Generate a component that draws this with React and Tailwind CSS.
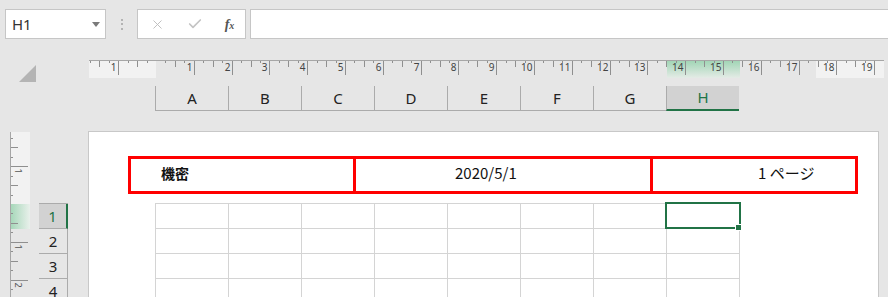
import { X, Check } from "lucide-react";

const COLS = ["A", "B", "C", "D", "E", "F", "G", "H"];
const ROWS = [1, 2, 3, 4];
const CM = 37.8;

function HRuler() {
  const w = 795;
  const ox = 67;
  const q = CM / 4;
  const ticks = [];
  for (let i = -7; ox + i * q <= w; i++) {
    if (i === 0) continue;
    const x = Math.round(ox + i * q) + 0.5;
    const len = i % 4 === 0 ? 14 : i % 2 === 0 ? 6 : 2;
    ticks.push(<line key={"t" + i} x1={x} y1={1} x2={x} y2={1 + len} stroke="#8f8f8f" strokeWidth="1" />);
    if (i % 4 === 0) {
      ticks.push(
        <text key={"l" + i} x={x - 2} y={11} textAnchor="end" fontSize="10" fill="#444" fontFamily="Noto Sans, sans-serif">
          {Math.abs(i / 4)}
        </text>
      );
    }
  }
  return (
    <svg width={w} height={18} className="block">
      <defs>
        <linearGradient id="hg" x1="0" y1="0" x2="0" y2="1">
          <stop offset="0" stopColor="#9ed4b3" />
          <stop offset="1" stopColor="#e4ebe6" />
        </linearGradient>
      </defs>
      <rect x="0" y="0" width="67" height="18" fill="#f2f2f2" />
      <rect x="727" y="0" width="68" height="18" fill="#f2f2f2" />
      <rect x="578" y="0" width="73" height="18" fill="url(#hg)" />
      <line x1="0" y1="0.5" x2={w} y2="0.5" stroke="#a6a6a6" />
      {ticks}
    </svg>
  );
}

function VRuler() {
  const h = 166;
  const oy = 72;
  const q = CM / 4;
  const ticks = [];
  for (let i = -7; oy + i * q <= h; i++) {
    if (i === 0) continue;
    const y = Math.round(oy + i * q) + 0.5;
    const len = i % 4 === 0 ? 17 : i % 2 === 0 ? 7 : 2;
    ticks.push(<line key={"t" + i} x1={1} y1={y} x2={1 + len} y2={y} stroke="#8f8f8f" strokeWidth="1" />);
    if (i % 4 === 0) {
      ticks.push(
        <text
          key={"l" + i}
          x={0}
          y={0}
          transform={`translate(5 ${y + 2}) rotate(90)`}
          fontSize="9"
          fill="#555"
          fontFamily="Noto Sans, sans-serif"
        >
          {Math.abs(i / 4)}
        </text>
      );
    }
  }
  return (
    <svg width={20} height={h} className="block">
      <defs>
        <linearGradient id="vg" x1="0" y1="0" x2="1" y2="0">
          <stop offset="0" stopColor="#a3d6b7" />
          <stop offset="1" stopColor="#e9f0eb" />
        </linearGradient>
      </defs>
      <rect x="0" y="0" width="20" height="72" fill="#f2f2f2" />
      <rect x="0" y="72" width="20" height="25" fill="url(#vg)" />
      <line x1="0.5" y1="0" x2="0.5" y2={h} stroke="#a6a6a6" />
      {ticks}
    </svg>
  );
}

export default function App() {
  return (
    <div className="w-[888px] h-[297px] overflow-hidden bg-[#e6e6e6] flex flex-col font-['Noto_Sans',sans-serif] text-[#222]">
      {/* formula bar */}
      <div className="flex items-center h-[30px] mt-[9px] pl-[5px] shrink-0">
        <div className="w-[101px] h-[30px] bg-white border border-[#c6c6c6] flex items-center pl-[6px] pr-[5px]">
          <span className="flex-1 text-[15px] text-[#333] leading-none">H1</span>
          <svg width="8" height="5"><polygon points="0,0 8,0 4,5" fill="#7a7a7a" /></svg>
        </div>
        <div className="w-[31px] flex flex-col items-center gap-[2.5px]">
          <span className="w-[2px] h-[2px] bg-[#b3b3b3]" />
          <span className="w-[2px] h-[2px] bg-[#b3b3b3]" />
          <span className="w-[2px] h-[2px] bg-[#b3b3b3]" />
        </div>
        <div className="w-[109px] h-[30px] bg-white border border-[#c6c6c6] flex items-center">
          <span className="w-[38px] flex justify-center"><X size={15} strokeWidth={1.5} color="#bdbdbd" /></span>
          <span className="w-[38px] flex justify-center"><Check size={16} strokeWidth={2.5} color="#c4c4c4" /></span>
          <span className="flex-1 flex justify-center italic font-['Liberation_Serif',serif] text-[14px] text-[#555] font-bold">
            f<span className="text-[10px] mt-[4px]">x</span>
          </span>
        </div>
        <div className="flex-1 h-[30px] ml-[4px] -mr-[2px] bg-white border border-[#c6c6c6]" />
      </div>

      {/* ruler + column headers */}
      <div className="flex mt-[21px] shrink-0">
        <div className="w-[89px]">
          <svg width="17" height="17" className="ml-[19px] mt-[5px] block">
            <polygon points="17,0 17,17 0,17" fill="#b4b4b4" />
          </svg>
        </div>
        <div className="flex flex-col">
          <HRuler />
          <div className="flex mt-[8px] ml-[66px]">
            {COLS.map((c) =>
              c === "H" ? (
                <div key={c} className="w-[73px] h-[25px] border-l border-[#ababab] border-b-2 border-b-[#217346] bg-[#d2d2d2] text-[#217346] text-[15px] flex items-center justify-center">
                  {c}
                </div>
              ) : (
                <div key={c} className="w-[73px] h-[25px] border-l border-b border-[#ababab] text-[15px] flex items-center justify-center">
                  {c}
                </div>
              )
            )}
          </div>
        </div>
      </div>

      {/* page area */}
      <div className="flex items-start flex-1 mt-[20px] min-h-0">
        <div className="ml-[10px] mt-[1px]">
          <VRuler />
        </div>
        <div className="ml-[9px] mt-[72px] w-[29px] flex flex-col border-t border-[#ababab]">
          {ROWS.map((r) =>
            r === 1 ? (
              <div key={r} className="h-[25px] bg-[#d2d2d2] border-r-2 border-r-[#217346] border-b border-b-[#ababab] text-[#217346] text-[15px] flex items-center justify-center">
                {r}
              </div>
            ) : (
              <div key={r} className="h-[25px] border-r border-b border-[#ababab] text-[15px] flex items-center justify-center">
                {r}
              </div>
            )
          )}
        </div>
        <div className="ml-[20px] w-[791px] self-stretch bg-white border border-b-0 border-[#c8c8c8] pt-[24px] pl-[39px]">
          <div className="w-[730px] h-[38px] border-[3px] border-[#ff0000] flex font-['Noto_Sans_CJK_JP',sans-serif] text-[#111]">
            <div className="w-[222px] flex items-center pl-[30px] pb-[3px] text-[14px] font-bold">機密</div>
            <div className="w-[297px] border-l-[3px] border-[#ff0000] flex items-center pl-[99px] pb-[3px] text-[15px]">2020/5/1</div>
            <div className="flex-1 border-l-[3px] border-[#ff0000] flex items-center pl-[105px] pb-[3px] text-[15px]">1 ページ</div>
          </div>
          <div className="relative mt-[9px] ml-[27px] w-[585px] border-l border-t border-[#d4d4d4]">
            {ROWS.map((r) => (
              <div key={r} className="flex">
                {COLS.map((c) => (
                  <div key={c} className="w-[73px] h-[25px] border-r border-b border-[#d4d4d4]" />
                ))}
              </div>
            ))}
            <div className="absolute left-[509px] top-[-2px] w-[76px] h-[27px] border-2 border-[#217346]">
              <div className="absolute left-[68px] top-[20px] w-[7px] h-[7px] bg-[#217346] border border-white" />
            </div>
          </div>
        </div>
      </div>
    </div>
  );
}
